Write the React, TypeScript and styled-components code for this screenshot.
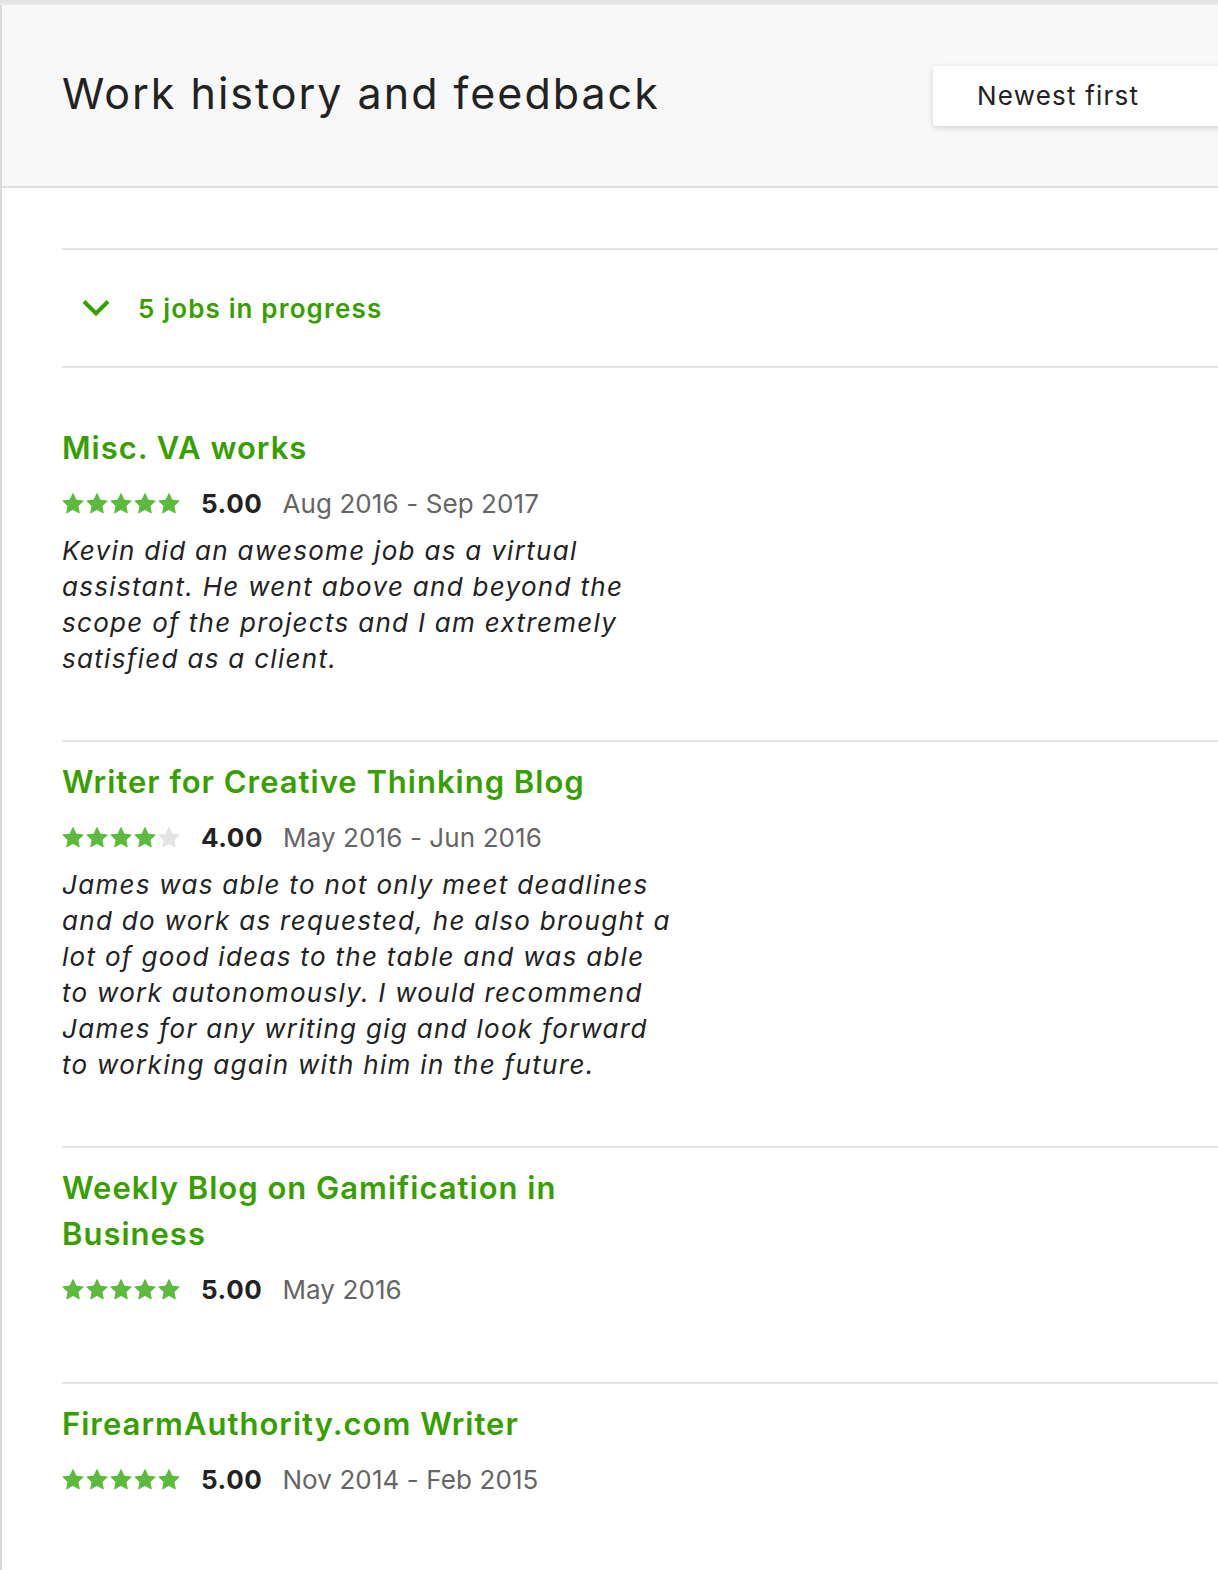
import React from "react";
import styled, { createGlobalStyle } from "styled-components";

const Global = createGlobalStyle`
  html, body { margin: 0; padding: 0; }
  body {
    background: linear-gradient(#e0e0e0, #ebebeb 5px, #fff 5px);
    overflow: hidden;
    font-family: Inter, "Open Sans", "Liberation Sans", sans-serif;
    color: #222;
  }
`;

const Card = styled.div`
  margin-top: 5px;
  width: 1320px;
  min-height: 1600px;
  background: #fff;
  border-left: 2px solid #dadada;
`;

const Header = styled.header`
  height: 183px;
  box-sizing: border-box;
  background: #f8f8f8;
  border-bottom: 2px solid #e0e0e0;
  display: flex;
  align-items: center;
  justify-content: space-between;
  padding: 0 63px 0 60px;
`;

const Title = styled.h2`
  margin: 0 0 6px;
  font-size: 43px;
  font-weight: 400;
  letter-spacing: 2px;
  color: #222;
`;

const Select = styled.div`
  width: 326px;
  height: 60px;
  box-sizing: border-box;
  background: #fff;
  border-radius: 3px;
  box-shadow: 0 2px 6px rgba(0, 0, 0, 0.15);
  display: flex;
  align-items: center;
  padding-left: 44px;
  font-size: 26px;
  color: #222;
  letter-spacing: 1.2px;
`;

const Body = styled.div`
  padding: 60px 0 0 60px;
`;

const Progress = styled.div`
  height: 120px;
  border-top: 2px solid #e4e4e4;
  border-bottom: 2px solid #e4e4e4;
  box-sizing: border-box;
  display: flex;
  align-items: center;
  gap: 28px;
  padding-left: 20px;
  margin-bottom: 40px;
  color: #37a000;
  font-size: 26px;
  font-weight: 600;
  letter-spacing: 1.15px;
`;

const Job = styled.section<{ $hasComment: boolean; $last: boolean }>`
  padding: 17px 0 ${(p) => (p.$hasComment ? 63 : 73)}px;
  border-bottom: ${(p) => (p.$last ? "none" : "2px solid #e4e4e4")};
`;

const JobTitle = styled.h3`
  margin: 0;
  width: 613px;
  font-size: 31px;
  line-height: 46px;
  font-weight: 600;
  color: #37a000;
  letter-spacing: 1px;
`;

const RatingRow = styled.div`
  display: flex;
  align-items: center;
  margin-top: 12px;
  height: 40px;
`;

const Stars = styled.div`
  display: flex;
  gap: 2px;
  margin-right: 21px;
`;

const Score = styled.span`
  font-size: 26px;
  font-weight: 700;
  color: #222;
  margin-right: 20px;
  letter-spacing: 0.6px;
`;

const DateRange = styled.span`
  font-size: 26px;
  color: #656565;
  letter-spacing: 0.1px;
`;

const Comment = styled.p`
  margin: 10px 0 0;
  width: 613px;
  font-size: 26px;
  line-height: 36px;
  font-style: italic;
  color: #222;
  letter-spacing: 1.3px;
`;

const Star = ({ on }: { on: boolean }) => {
  const c = on ? "#5bbb3d" : "#e3e3e3";
  return (
    <svg width="22" height="21" viewBox="0 0 24 23">
      <polygon
        points="12,0.8 15.3,7.8 23,8.7 17.3,14 18.8,21.6 12,17.9 5.2,21.6 6.7,14 1,8.7 8.7,7.8"
        fill={c}
        stroke={c}
        strokeWidth="1.2"
        strokeLinejoin="round"
      />
    </svg>
  );
};

const Rating = ({ value }: { value: number }) => (
  <Stars>
    {[0, 1, 2, 3, 4].map((i) => (
      <Star key={i} on={i < value} />
    ))}
  </Stars>
);

type JobData = {
  title: string;
  rating: number;
  dates: string;
  comment?: string;
};

const jobs: JobData[] = [
  {
    title: "Misc. VA works",
    rating: 5,
    dates: "Aug 2016 - Sep 2017",
    comment:
      "Kevin did an awesome job as a virtual assistant. He went above and beyond the scope of the projects and I am extremely satisfied as a client.",
  },
  {
    title: "Writer for Creative Thinking Blog",
    rating: 4,
    dates: "May 2016 - Jun 2016",
    comment:
      "James was able to not only meet deadlines and do work as requested, he also brought a lot of good ideas to the table and was able to work autonomously. I would recommend James for any writing gig and look forward to working again with him in the future.",
  },
  {
    title: "Weekly Blog on Gamification in Business",
    rating: 5,
    dates: "May 2016",
  },
  {
    title: "FirearmAuthority.com Writer",
    rating: 5,
    dates: "Nov 2014 - Feb 2015",
  },
];

export default function App() {
  return (
    <>
      <Global />
      <Card>
        <Header>
          <Title>Work history and feedback</Title>
          <Select>Newest first</Select>
        </Header>
        <Body>
          <Progress>
            <svg width="28" height="18" viewBox="0 0 28 18">
              <polyline
                points="2,2.5 14,14.5 26,2.5"
                fill="none"
                stroke="#37a000"
                strokeWidth="4"
              />
            </svg>
            5 jobs in progress
          </Progress>
          {jobs.map((j, i) => (
            <Job key={j.title} $hasComment={!!j.comment} $last={i === jobs.length - 1}>
              <JobTitle>{j.title}</JobTitle>
              <RatingRow>
                <Rating value={j.rating} />
                <Score>{j.rating.toFixed(2)}</Score>
                <DateRange>{j.dates}</DateRange>
              </RatingRow>
              {j.comment && <Comment>{j.comment}</Comment>}
            </Job>
          ))}
        </Body>
      </Card>
    </>
  );
}
